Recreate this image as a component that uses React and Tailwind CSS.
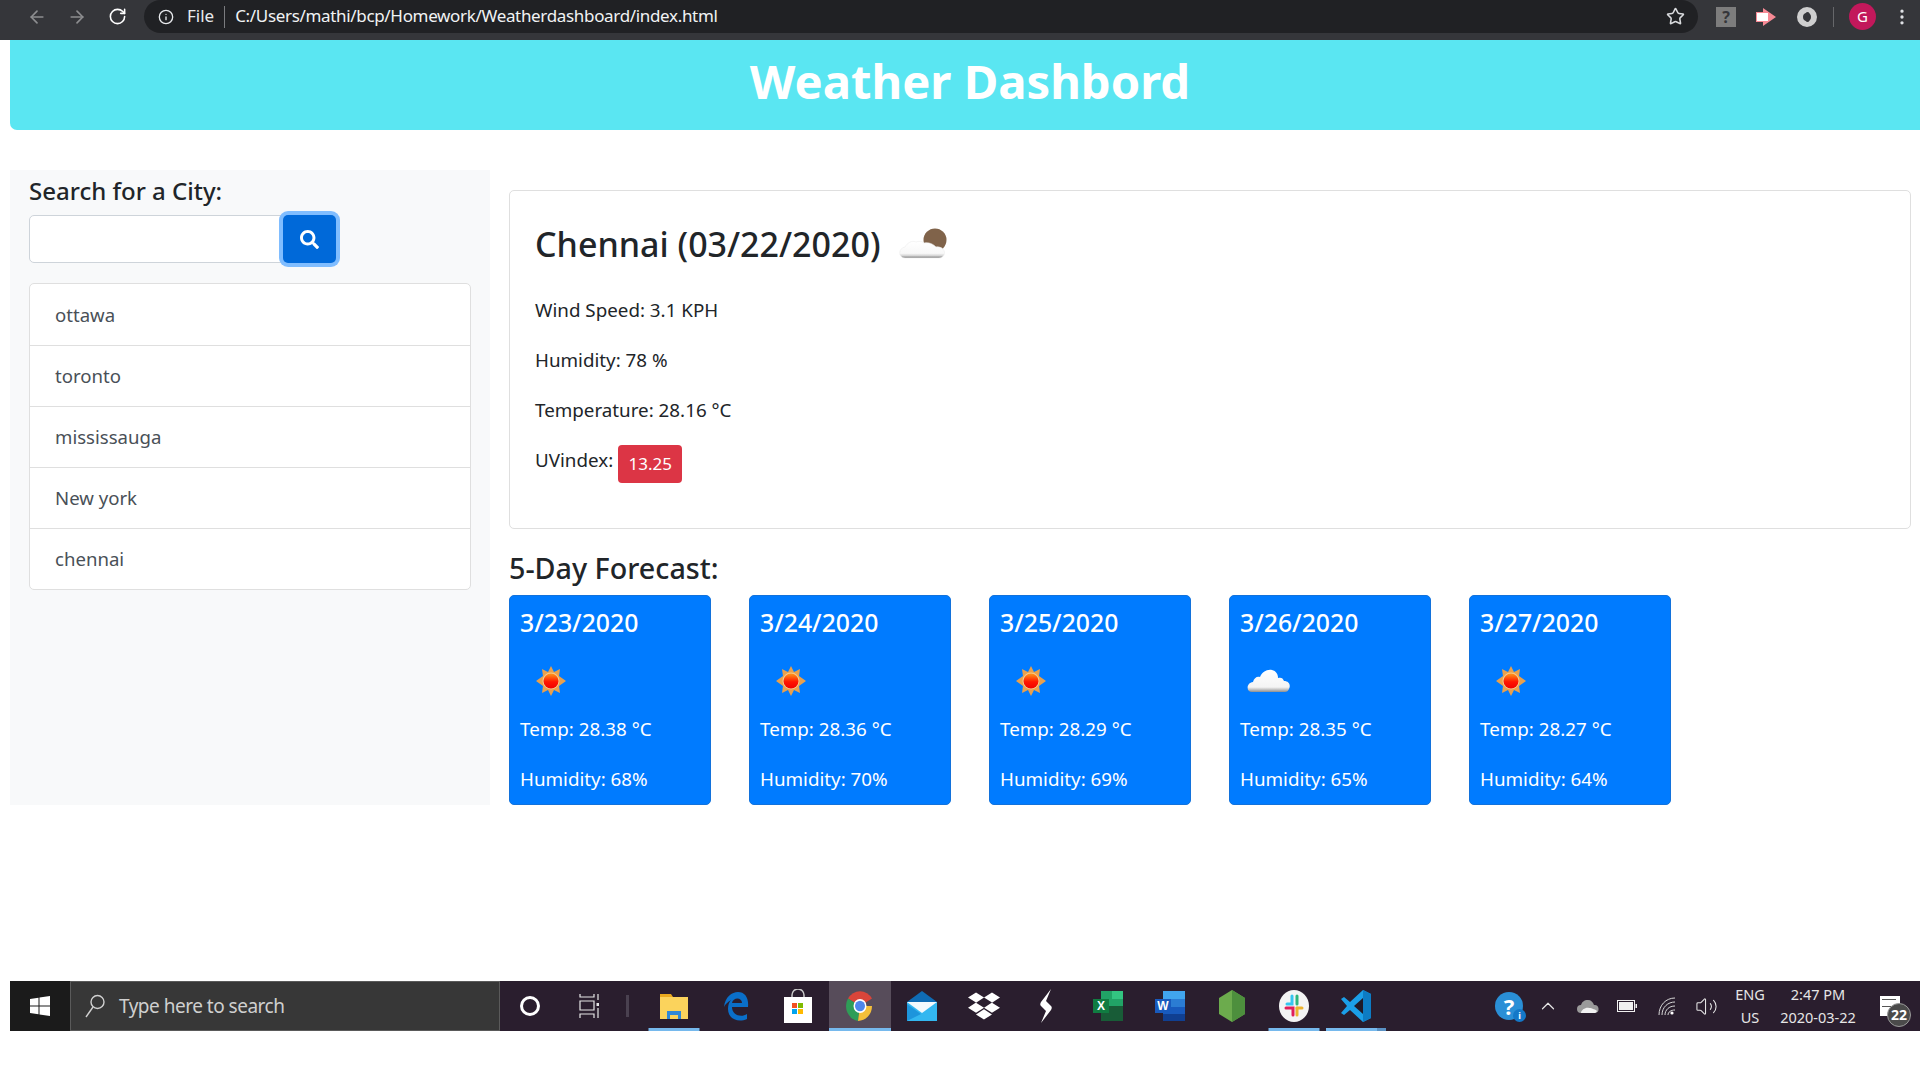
import { ArrowLeft, ArrowRight, RotateCw, Info, Star, ChevronUp, EllipsisVertical, Volume2 } from 'lucide-react';
import { FaSearch, FaDropbox } from 'react-icons/fa';

const cities = ['ottawa', 'toronto', 'mississauga', 'New york', 'chennai'];

const forecast = [
  { date: '3/23/2020', temp: '28.38', humidity: '68', icon: 'sun' },
  { date: '3/24/2020', temp: '28.36', humidity: '70', icon: 'sun' },
  { date: '3/25/2020', temp: '28.29', humidity: '69', icon: 'sun' },
  { date: '3/26/2020', temp: '28.35', humidity: '65', icon: 'cloud' },
  { date: '3/27/2020', temp: '28.27', humidity: '64', icon: 'sun' },
];

const SunIcon = () => (
  <svg width="30" height="30" viewBox="0 0 30 30">
    <defs>
      <linearGradient id="sunFill" x1="0" y1="0" x2="0" y2="1">
        <stop offset="0" stopColor="#ff9a1a" />
        <stop offset="0.55" stopColor="#ff1500" />
        <stop offset="1" stopColor="#f00000" />
      </linearGradient>
    </defs>
    <path
      d="M15 0l3 6 6-3-1 7 7 5-7 5 1 7-6-3-3 6-3-6-6 3 1-7-7-5 7-5-1-7 6 3z"
      fill="#e9a04c"
    />
    <circle cx="15" cy="15" r="8.5" fill="#f6c98e" />
    <circle cx="15" cy="15" r="7.5" fill="url(#sunFill)" />
  </svg>
);

const CloudIcon = () => (
  <svg width="44" height="24" viewBox="0 0 44 24">
    <defs>
      <linearGradient id="cloudFill" x1="0" y1="0" x2="0" y2="1">
        <stop offset="0" stopColor="#ffffff" />
        <stop offset="0.78" stopColor="#f4f4f4" />
        <stop offset="1" stopColor="#8f8f8f" />
      </linearGradient>
    </defs>
    <path
      d="M5 23c-6 0-6-9 1-10 1-4 4-6 7-5 2-5 7-8 12-7 4 1 6 4 6 8 3-1 5 0 6 3 5 0 7 4 5 8-1 2-2 3-4 3z"
      fill="url(#cloudFill)"
    />
  </svg>
);

const PartlyCloudy = () => (
  <svg width="50" height="32" viewBox="0 0 50 32">
    <defs>
      <linearGradient id="partCloud" x1="0" y1="0" x2="0" y2="1">
        <stop offset="0" stopColor="#ffffff" />
        <stop offset="0.72" stopColor="#f8f8f8" />
        <stop offset="0.85" stopColor="#d8d8d8" />
        <stop offset="1" stopColor="#7f7f7f" />
      </linearGradient>
    </defs>
    <circle cx="36" cy="12" r="11.5" fill="#80634a" />
    <path
      d="M6 30c-7 0-7-10 0-11 2-4 7-7 11-5 3-1 6-1 8 1 5-1 9 1 12 4 6-1 10 4 8 8-1 2-3 3-5 3z"
      fill="url(#partCloud)"
      stroke="#ececec"
      strokeWidth="0.6"
    />
  </svg>
);

const ChromeIcon = () => (
  <svg width="28" height="30" viewBox="0 0 28 28" preserveAspectRatio="none">
    <path d="M14 14L2 7a14 14 0 0 1 24 0z" fill="#d9453a" />
    <path d="M14 14L2 7a14 14 0 0 0 10 21z" fill="#2f9d57" />
    <path d="M14 14h12a14 14 0 0 1-14 14z" fill="#f4bf3a" />
    <circle cx="14" cy="14" r="6.5" fill="#fff" />
    <circle cx="14" cy="14" r="5" fill="#4f86ec" />
  </svg>
);

const taskIcons = [
  {
    key: 'files',
    underline: 'w-[51px] bg-[#76b9ed]',
    svg: (
      <svg width="30" height="30" viewBox="0 0 30 30">
        <path d="M1 3h11l2 3h15v22H1z" fill="#e9a91e" />
        <path d="M1 6h28v22H1z" fill="#fbd35c" />
        <path d="M8 20h14v8h-3v-4h-8v4H8z" fill="#2f88d8" />
      </svg>
    ),
  },
  {
    key: 'edge',
    svg: (
      <svg width="26" height="30" viewBox="0 0 26 30">
        <path
          d="M1 16C2 6 9 1 15 1c7 0 11 6 10 15H9c0 8 9 11 15 7v5c-9 4-19 0-19-10 0-4 1-7 3-9-3 2-6 4-7 7zm8-4h10c0-6-9-6-10 0z"
          fill="#0a6fc9"
        />
      </svg>
    ),
  },
  {
    key: 'store',
    svg: (
      <svg width="30" height="34" viewBox="0 0 30 34">
        <path d="M9 10V6a6 6 0 0 1 12 0v4" fill="none" stroke="#c8c8c8" strokeWidth="1.5" />
        <path d="M1 8h28v26H1z" fill="#fff" />
        <path d="M9 14h5v5H9z" fill="#f25022" />
        <path d="M15 14h5v5h-5z" fill="#7fba00" />
        <path d="M9 20h5v5H9z" fill="#00a4ef" />
        <path d="M15 20h5v5h-5z" fill="#ffb900" />
      </svg>
    ),
  },
  { key: 'chrome', active: true, underline: 'w-full bg-[#76b9ed]', svg: <ChromeIcon /> },
  {
    key: 'mail',
    svg: (
      <svg width="30" height="30" viewBox="0 0 30 30">
        <path d="M0 11L15 0l15 11v19H0z" fill="#0f6cb5" />
        <path d="M0 11h30v19H0z" fill="#33b7f0" />
        <path d="M0 11h30L15 22z" fill="#f3f9fd" />
        <path d="M0 30V13l14 10z" fill="#1d95dc" />
      </svg>
    ),
  },
  { key: 'dropbox', svg: <FaDropbox className="text-white" size={32} /> },
  {
    key: 'stremio',
    svg: (
      <svg width="16" height="34" viewBox="0 0 16 34">
        <path d="M13 0L3 13c-1 2-1 3 0 4l5 5-5 12 10-13c1-2 1-3 0-4L8 12z" fill="#fff" />
      </svg>
    ),
  },
  {
    key: 'excel',
    svg: (
      <svg width="30" height="30" viewBox="0 0 30 30">
        <path d="M8 0h22v30H8z" fill="#21a366" />
        <path d="M19 0h11v8H19z" fill="#33c481" />
        <path d="M8 15h22v15H8z" fill="#185c37" />
        <path d="M0 8h16v14H0z" fill="#107c41" />
        <text x="8" y="19" fill="#fff" fontSize="12" fontWeight="700" textAnchor="middle" fontFamily="Liberation Sans, sans-serif">X</text>
      </svg>
    ),
  },
  {
    key: 'word',
    svg: (
      <svg width="30" height="30" viewBox="0 0 30 30">
        <path d="M8 0h22v8H8z" fill="#41a5ee" />
        <path d="M8 8h22v8H8z" fill="#2b7cd3" />
        <path d="M8 16h22v7H8z" fill="#185abd" />
        <path d="M8 23h22v7H8z" fill="#103f91" />
        <path d="M0 8h16v14H0z" fill="#185abd" />
        <text x="8" y="19" fill="#fff" fontSize="12" fontWeight="700" textAnchor="middle" fontFamily="Liberation Sans, sans-serif">W</text>
      </svg>
    ),
  },
  {
    key: 'node',
    svg: (
      <svg width="28" height="32" viewBox="0 0 28 32">
        <path d="M14 0l13 8v16l-13 8-13-8V8z" fill="#6cab4d" />
        <path d="M14 0l13 8v16l-13 8z" fill="#4d8f3d" />
      </svg>
    ),
  },
  {
    key: 'slack',
    underline: 'w-[51px] bg-[#76b9ed]',
    svg: (
      <svg width="30" height="32" viewBox="0 0 30 32">
        <ellipse cx="15" cy="16" rx="15" ry="16" fill="#f4f4f4" />
        <path d="M13 6v8H8" fill="none" stroke="#36c5f0" strokeWidth="3" strokeLinecap="round" />
        <path d="M18 6v8" fill="none" stroke="#2eb67d" strokeWidth="3" strokeLinecap="round" />
        <path d="M18 18h5" fill="none" stroke="#ecb22e" strokeWidth="3" strokeLinecap="round" />
        <path d="M18 18v7" fill="none" stroke="#ecb22e" strokeWidth="3" strokeLinecap="round" />
        <path d="M7 18h7v7" fill="none" stroke="#e01e5a" strokeWidth="3" strokeLinecap="round" />
      </svg>
    ),
  },
  {
    key: 'vscode',
    underline: 'w-[60px] bg-[linear-gradient(to_right,#76b9ed_85%,#5b92c4_85%)]',
    svg: (
      <svg width="32" height="32" viewBox="0 0 32 32">
        <path d="M23 0l8 4v24l-8 4-13-12-6 5-3-2 6-7-6-7 3-2 6 5z" fill="#1b9fe8" />
        <path d="M23 8l-9 8 9 8z" fill="#201a28" />
        <path d="M23 0l8 4v24l-8 4z" fill="#0d7cc4" />
      </svg>
    ),
  },
];

const TopBar = () => (
  <div className="flex h-[40px] shrink-0 items-start bg-[#35363a] text-white">
    <div className="flex h-[33px] items-center text-[#8d8e90]">
      <ArrowLeft size={20} className="ml-[27px]" />
      <ArrowRight size={20} className="ml-[20px]" />
      <RotateCw size={19} className="ml-[21px] text-white" />
    </div>
    <div className="ml-[17px] flex h-[33px] flex-1 items-center rounded-[17px] bg-[#202124] pl-[14px] pr-[13px]">
      <Info size={16} className="text-[#e8eaed]" />
      <span className="ml-[13px] pb-[2px] text-[17px] text-[#e8eaed]">File</span>
      <span className="ml-[10px] h-[22px] w-px bg-[#7b7c7f]" />
      <span className="ml-[10px] pb-[2px] text-[17px] tracking-[-0.33px] text-[#f1f3f4]">C:/Users/mathi/bcp/Homework/Weatherdashboard/index.html</span>
      <Star size={19} className="ml-auto text-[#d8dadd]" />
    </div>
    <div className="flex h-[33px] w-[222px] items-center">
      <span className="ml-[18px] flex h-[20px] w-[20px] items-center justify-center bg-[#7d7d7d] text-[16px] font-bold leading-none text-[#35363a]">?</span>
      <svg className="ml-[20px]" width="20" height="18" viewBox="0 0 20 18">
        <path d="M0 4h7V0l13 9-13 9v-4H0z" fill="#f78a95" />
        <path d="M1 5h11v8H1z" fill="#fff" />
      </svg>
      <svg className="ml-[21px]" width="20" height="20" viewBox="0 0 20 20">
        <circle cx="10" cy="10" r="7" fill="none" stroke="#cfcfcf" strokeWidth="6" />
        <ellipse cx="10.5" cy="10" rx="2.5" ry="5" fill="#35363a" />
      </svg>
      <span className="ml-[16px] h-[20px] w-px bg-[#66676a]" />
      <span className="ml-[15px] flex h-[27px] w-[27px] items-center justify-center rounded-full bg-[#c2185b] text-[15px]">G</span>
      <EllipsisVertical size={20} className="ml-[16px] text-[#dfe1e5]" />
    </div>
  </div>
);

const Sidebar = () => (
  <aside className="flex h-[635px] w-[480px] shrink-0 flex-col bg-[#f8f9fa] px-[19px]">
    <h2 className="mt-[3px] h-[42px] text-[24px] font-medium leading-[36px] text-[#212529]">Search for a City:</h2>
    <div className="flex h-[48px] items-center">
      <div className="h-[48px] w-[254px] rounded-l-[5px] border border-[#ced4da] bg-white" />
      <button className="flex h-[48px] w-[53px] items-center justify-center rounded-[5px] bg-[#0069d9] shadow-[0_0_0_4px_#80bdff]">
        <FaSearch size={19} className="text-white" />
      </button>
    </div>
    <ul className="mt-[20px] w-[442px] overflow-hidden rounded-[5px] border border-[#dfdfdf] bg-white">
      {cities.map((city, i) => (
        <li
          key={city}
          className={`flex h-[61px] items-center pl-[25px] text-[18.6px] text-[#495057] ${i > 0 ? 'border-t border-[#dfdfdf]' : ''}`}
        >
          {city}
        </li>
      ))}
    </ul>
  </aside>
);

const CurrentWeather = () => (
  <section className="h-[339px] rounded-[5px] border border-[#dfdfdf] bg-white pl-[25px]">
    <div className="mt-[30px] flex h-[46px] items-center">
      <h1 className="text-[34px] font-medium leading-[46px] text-[#212529]">Chennai (03/22/2020)</h1>
      <span className="ml-[18px]"><PartlyCloudy /></span>
    </div>
    <div className="mt-[28px] text-[18.8px] text-[#212529]">
      <p className="h-[50px] leading-[30px]">Wind Speed: 3.1 KPH</p>
      <p className="h-[50px] leading-[30px]">Humidity: 78 %</p>
      <p className="h-[50px] leading-[30px]">Temperature: 28.16 °C</p>
      <p className="flex h-[38px] items-start leading-[30px]">
        UVindex:
        <span className="ml-[5px] flex h-[38px] w-[64px] items-center justify-center rounded-[4px] bg-[#dc3545] text-[17px] text-white">13.25</span>
      </p>
    </div>
  </section>
);

const ForecastCard = ({ day }) => (
  <div className="flex h-[210px] w-[202px] flex-col rounded-[5px] border border-[#1272dc] bg-[#007bff] pl-[10px] text-white">
    <h3 className="mt-[8px] h-[36px] text-[24.8px] font-medium leading-[36px]">{day.date}</h3>
    <div className="mt-[12px] flex h-[58px] items-center">
      {day.icon === 'sun' ? (
        <span className="ml-[16px] flex"><SunIcon /></span>
      ) : (
        <span className="ml-[7px] flex"><CloudIcon /></span>
      )}
    </div>
    <p className="mt-[4px] h-[50px] text-[18.8px] leading-[30px]">Temp: {day.temp} °C</p>
    <p className="h-[30px] text-[18.8px] leading-[30px]">Humidity: {day.humidity}%</p>
  </div>
);

const Taskbar = () => (
  <div className="flex h-[50px] items-stretch bg-[#2a1e2e] text-white">
    <div className="flex w-[60px] items-center justify-center bg-[#1b1b1b]">
      <svg width="20" height="20" viewBox="0 0 20 20">
        <path d="M0 3l8.5-1.2V9.5H0zM9.5 1.6L20 0v9.5H9.5zM0 10.5h8.5v7.7L0 17zM9.5 10.5H20V20L9.5 18.4z" fill="#fff" />
      </svg>
    </div>
    <div className="flex w-[430px] items-center border border-[#5a5a5a] bg-[#373737] pl-[14px]">
      <svg width="20" height="24" viewBox="0 0 20 24" fill="none" stroke="#d0d0d0" strokeWidth="1.4">
        <circle cx="12.5" cy="8" r="6.5" />
        <path d="M8 13L1 23" />
      </svg>
      <span className="ml-[14px] text-[19px] tracking-[-0.5px] text-[#cfcfcf]">Type here to search</span>
    </div>
    <div className="flex w-[143px] items-center">
      <span className="ml-[20px] h-[20px] w-[20px] rounded-full border-[3px] border-white" />
      <svg className="ml-[39px]" width="20" height="24" viewBox="0 0 20 24" fill="none" stroke="#e6e6e6" strokeWidth="1.2">
        <path d="M1 0v3h14V0M1 7h14v9H1zM1 24v-4h14v4" />
        <path d="M19 0v6M19 14v10" />
        <rect x="17.5" y="9" width="3" height="3" fill="#e6e6e6" stroke="none" />
      </svg>
      <span className="ml-[27px] h-[22px] w-[3px] bg-[#4a4150]" />
    </div>
    <div className="flex">
      {taskIcons.map((icon) => (
        <div
          key={icon.key}
          className={`relative flex w-[62px] items-center justify-center ${icon.active ? 'bg-[#574c5a]' : ''}`}
        >
          {icon.svg}
          {icon.underline && <span className={`absolute bottom-0 left-1/2 h-[3px] -translate-x-1/2 ${icon.underline}`} />}
        </div>
      ))}
    </div>
    <div className="ml-auto flex items-center">
      <span className="relative flex h-[28px] w-[28px] items-center justify-center rounded-full bg-[#2a8fd6] text-[22px] font-bold text-white">
        ?
        <span className="absolute -bottom-[2px] -right-[3px] flex h-[13px] w-[13px] items-center justify-center rounded-full bg-[#1478c8] text-[9px] leading-none">i</span>
      </span>
      <ChevronUp size={22} strokeWidth={1.3} className="ml-[14px] text-[#e6e6e6]" />
      <svg className="ml-[18px]" width="22" height="13" viewBox="0 0 22 13">
        <path d="M4 13a4 4 0 0 1 0-8c1-3 3-5 7-5 3 0 5 2 6 5a4 4 0 0 1 1 8z" fill="#9a9a9a" />
        <path d="M4 13c0-3 5-6 8-5 3 0 7 2 8 3-1 2-2 2-3 2z" fill="#f2f2f2" />
      </svg>
      <svg className="ml-[18px]" width="20" height="12" viewBox="0 0 20 12">
        <rect x="0.5" y="0.5" width="17" height="11" fill="none" stroke="#f0f0f0" />
        <rect x="2" y="2" width="14" height="8" fill="#f0f0f0" />
        <rect x="18.5" y="4" width="1.5" height="4" fill="#f0f0f0" />
      </svg>
      <svg className="ml-[21px]" width="18" height="18" viewBox="0 0 18 18" fill="none" stroke="#d8d8d8" strokeWidth="1">
        <path d="M1 18C1 8 8 1 17 1M4 18c0-8 6-13 13-13M7 18c0-5 4-9 10-9M10 18c0-3 3-5 7-5" />
        <circle cx="14" cy="16" r="1.6" fill="#fff" stroke="none" />
      </svg>
      <Volume2 size={23} strokeWidth={1.1} className="ml-[19px] text-[#e6e6e6]" />
      <div className="ml-[12px] w-[40px] text-center text-[14.5px] leading-[23px] text-[#e6e6e6]">
        <div>ENG</div>
        <div>US</div>
      </div>
      <div className="ml-[6px] w-[84px] text-center text-[14.5px] leading-[23px] text-[#e6e6e6]">
        <div>2:47 PM</div>
        <div>2020-03-22</div>
      </div>
      <div className="relative ml-[20px] mr-[20px] h-[20px] w-[20px] bg-white">
        <span className="absolute left-[2px] top-[3px] h-[8px] w-[14px] border-y border-[#555]" />
        <span className="absolute -bottom-[11px] left-[7px] flex h-[24px] w-[24px] items-center justify-center rounded-full border border-[#9a9a9a] bg-[#4b4b4b] text-[14px] font-bold leading-none text-white">22</span>
      </div>
    </div>
  </div>
);

export default function App() {
  return (
    <div className="flex h-[1080px] w-[1920px] flex-col overflow-hidden bg-white font-['Noto_Sans','Open_Sans',sans-serif]">
      <TopBar />
      <div className="flex flex-1 flex-col pl-[10px]">
        <header className="flex h-[90px] shrink-0 items-center justify-center rounded-bl-[7px] bg-[#5ae6f2] pb-[6px] pl-[10px]">
          <h1 className="text-[47.2px] font-bold leading-none text-white">Weather Dashbord</h1>
        </header>
        <div className="mt-[40px] flex">
          <Sidebar />
          <main className="flex-1 pl-[19px] pr-[9px] pt-[20px]">
            <CurrentWeather />
            <h2 className="mt-[16px] h-[50px] text-[28.7px] font-medium leading-[46px] text-[#212529]">5-Day Forecast:</h2>
            <div className="flex gap-[38px]">
              {forecast.map((day) => (
                <ForecastCard key={day.date} day={day} />
              ))}
            </div>
          </main>
        </div>
        <div className="mt-[176px]">
          <Taskbar />
        </div>
      </div>
    </div>
  );
}
